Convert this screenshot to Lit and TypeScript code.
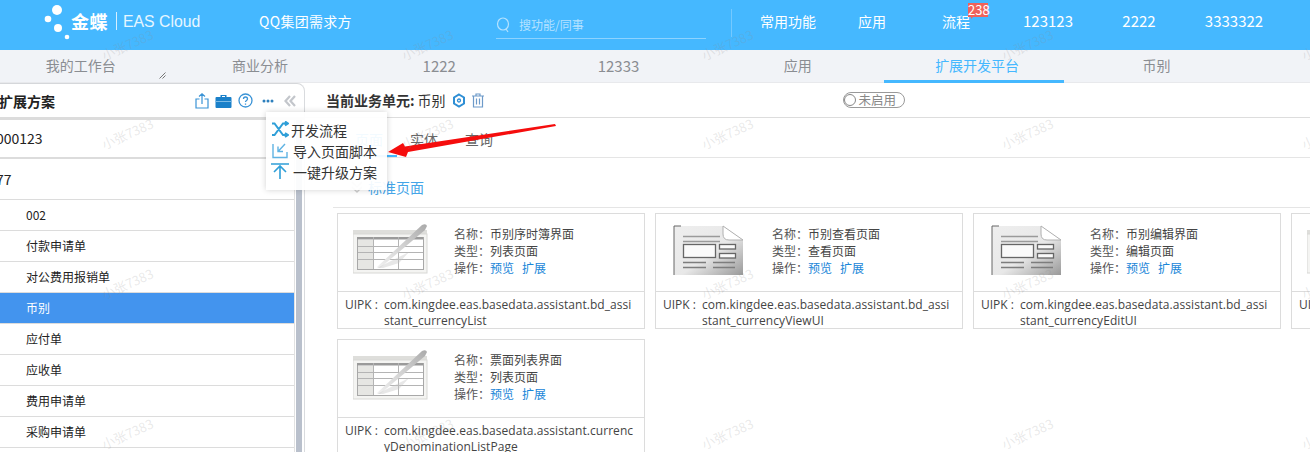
import { LitElement, html, css, svg } from "lit";
import { customElement } from "lit/decorators.js";

const listThumb = svg`<svg class="thumb" width="78" height="56" viewBox="0 0 78 56">
  <defs><linearGradient id="pen" x1="0" y1="1" x2="1" y2="0"><stop offset="0" stop-color="#f2f2f2"/><stop offset=".5" stop-color="#d2d2d2"/><stop offset="1" stop-color="#aaa"/></linearGradient></defs>
  <rect x="0" y="8" width="74" height="4" fill="#dededb"/>
  <rect x="0" y="12" width="74" height="39" fill="#f4f4f2" stroke="#d8d8d5"/>
  <rect x="4.500" y="15.500" width="66" height="32" fill="#fff" stroke="#a8a8a8"/>
  <rect x="4" y="15" width="66" height="2.500" fill="#9a9a9a"/>
  <rect x="5" y="18" width="15" height="29" fill="#e6e6e3"/>
  <path d="M5 24.500H70M5 30.500H70M5 37.500H70M20.500 15V47M45.500 15V47" stroke="#b4b4b4" fill="none"/>
  <path d="M24 45 L69 3 Q73 1 74 4 L72 8 L27 46 Z" fill="url(#pen)"/>
  <path d="M24 46 L56 30 L46 41 L30 46 Z" fill="#c4c4c4" opacity=".4"/>
</svg>`;

const docThumb = svg`<svg class="thumb" width="78" height="56" viewBox="0 0 78 56">
  <defs><linearGradient id="doc" x1="0" y1="0" x2="1" y2="1"><stop offset="0" stop-color="#eee"/><stop offset=".55" stop-color="#e8e8e8"/><stop offset="1" stop-color="#999"/></linearGradient></defs>
  <path d="M3 4H52L72 18V53H3Z" fill="url(#doc)"/>
  <path d="M3 53V4H10" stroke="#666" fill="none"/>
  <path d="M52 4V12Q52 18 58 18H72Z" fill="#fff" stroke="#b0b0b0"/>
  <path d="M12 14.500H49M12 19.500H49" stroke="#9a9a9a" stroke-width="1.300" fill="none"/>
  <rect x="12.500" y="22.500" width="32" height="13" fill="#fafafa" stroke="#666" stroke-width="1.300"/>
  <rect x="48.500" y="22.500" width="16" height="4.500" fill="#fafafa" stroke="#666" stroke-width="1.300"/>
  <rect x="48.500" y="31.500" width="16" height="4.500" fill="#fafafa" stroke="#666" stroke-width="1.300"/>
  <path d="M12 40.500H35M12 45.500H35M42 40.500H64M42 45.500H64" stroke="#7d7d7d" stroke-width="1.300" fill="none"/>
</svg>`;

interface Card { name: string; type: string; uipk: [string, string]; thumb: unknown }

const base = "com.kingdee.eas.basedata.assistant.";
const cards: Card[] = [
  { name: "币别序时簿界面", type: "列表页面", uipk: [base + "bd_assi", "stant_currencyList"], thumb: listThumb },
  { name: "币别查看页面", type: "查看页面", uipk: [base + "bd_assi", "stant_currencyViewUI"], thumb: docThumb },
  { name: "币别编辑界面", type: "编辑页面", uipk: [base + "bd_assi", "stant_currencyEditUI"], thumb: docThumb },
  { name: "币别序时簿", type: "列表页面", uipk: [base + "bd_assi", "stant_currency"], thumb: listThumb },
  { name: "票面列表界面", type: "列表页面", uipk: [base + "currenc", "yDenominationListPage"], thumb: listThumb },
];

const navItems = [
  ["常用功能", 84], ["应用", 84], ["流程", 84], ["123123", 100], ["2222", 82], ["3333322", 108],
] as const;
const tabs = ["我的工作台", "商业分析", "1222", "12333", "应用", "扩展开发平台", "币别"];
const rows = ["002", "付款申请单", "对公费用报销单", "币别", "应付单", "应收单", "费用申请单", "采购申请单"];
const marks: [number, number][] = [];
for (const x of [100, 400, 700, 1000, 1300]) for (const y of [33, 122, 272, 422]) marks.push([x, y]);

@customElement("app-root")
export class AppRoot extends LitElement {
  static styles = css`
    :host { display: block; width: 1310px; height: 452px; overflow: hidden; position: relative; background: #fff;
      font-family: "Noto Sans CJK SC", "Open Sans", sans-serif; font-size: 12px; color: #333; }
    .latin { font-family: "Open Sans", "Noto Sans CJK SC", sans-serif; }

    .header { height: 50px; background: #45b8ff; color: #fff; display: flex; align-items: center; }
    .logo { width: 259px; height: 50px; flex: none; display: flex; align-items: center; padding: 0 0 8px 44px; box-sizing: border-box; }
    .logo svg { flex: none; align-self: flex-start; margin-right: -1px; }
    .logo b { font-size: 18px; line-height: 1; letter-spacing: .5px; font-weight: 700; width: 45px; flex: none; }
    .logo i { width: 1px; height: 18px; background: #d6efff; margin-right: 6px; flex: none; }
    .logo span { font-family: "Liberation Sans", sans-serif; font-size: 15.800px; color: #e6f6ff; white-space: nowrap; padding-top: 1px; }
    .org { width: 237px; flex: none; font-size: 14px; letter-spacing: .3px; padding-bottom: 8px; }
    .search { width: 210px; height: 29px; flex: none; box-sizing: border-box; border-bottom: 1px solid #8dd3ff; margin-bottom: 1px; display: flex; align-items: center; gap: 8px; color: #b5e2ff; font-size: 12px; }
    .divider { width: 1px; height: 28px; background: #74c9ff; margin-left: 25px; margin-top: -4px; flex: none; }
    .nav { display: flex; margin-left: 14px; margin-top: -8px; }
    .nav div { font-size: 14px; line-height: 20px; text-align: center; position: relative; flex: none; }
    .nav .num { font-size: 15px; }
    .badge { position: absolute; left: 54px; top: -8px; height: 14px; line-height: 14px; width: 20px; overflow: visible; text-align: center; background: #f0625a; color: #fff; font-size: 13px; }
    .badge::after { content: ""; position: absolute; left: 3px; bottom: -2px; border-top: 2px solid #f0625a; border-right: 2px solid transparent; }

    .tabs { height: 32px; background: #f1f3f7; display: flex; margin-left: -9px; width: 1319px; border-bottom: 1px solid #e8e9ec; position: relative; }
    .tab { width: 179.300px; flex: none; text-align: center; font-size: 14px; line-height: 31px; color: #8a8d92; position: relative; }
    .tab.num { font-size: 15px; }
    .tab.active { color: #45b8ff; }
    .tab.active::after { content: ""; position: absolute; left: -3px; width: 180px; bottom: -1px; height: 3px; background: #45b8ff; }
    .grip { position: absolute; left: 168px; top: 22px; }

    .main { display: flex; height: 369px; }
    .side { width: 305px; flex: none; box-sizing: border-box; border-right: 1px solid #d9dbde; border-top: 1px solid #d5d7da; border-top-right-radius: 8px; display: flex; flex-direction: column; }
    .side-head { height: 33px; flex: none; display: flex; align-items: center; border-bottom: 3px solid #dcdcdc; }
    .side-head b { font-size: 14px; color: #222; margin-left: -1px; flex: 1; }
    .side-icons { display: flex; align-items: center; margin-right: 8px; }
    .side-body { display: flex; flex: 1; min-height: 0; overflow: hidden; }
    .list { width: 295px; flex: none; border-right: 1px solid #e2e2e2; box-sizing: border-box; }
    .scroll { width: 6px; background: #b9c0cc; margin-left: 1px; flex: none; }
    .top-row { height: 39px; box-sizing: border-box; line-height: 37px; font-size: 14px; color: #222; padding-left: 0; text-indent: -4px; border-bottom: 2px solid #dcdcdc; }
    .top-row.second { height: 41px; line-height: 40px; border-bottom: 1px solid #dcdcdc; }
    .row { height: 31px; box-sizing: border-box; border-bottom: 1px solid #dcdcdc; line-height: 30px; padding-left: 26px; color: #222; }
    .row.sel { background: #4394ee; color: #fff; }

    .content { flex: 1; min-width: 0; }
    .bar { height: 35px; box-sizing: border-box; border-bottom: 1px solid #ddd; display: flex; align-items: center; padding-left: 21px; position: relative; }
    .bar b { font-size: 14px; color: #333; }
    .bar .unit { font-size: 14px; color: #333; margin-left: 3px; }
    .bar svg { flex: none; }
    .toggle { margin-left: 358px; width: 60px; height: 14px; border: 1px solid #999; border-radius: 8px; display: flex; align-items: center; font-size: 12.500px; color: #888; line-height: 14px; gap: 3px; }
    .toggle i { width: 12px; height: 12px; border-radius: 50%; border: 1px solid #888; background: #fff; margin-left: 0; box-sizing: border-box; }
    .subtabs { height: 40px; box-sizing: border-box; border-bottom: 1px solid #e5e5e5; display: flex; align-items: center; font-size: 14px; color: #666; padding: 3px 0 0 50px; }
    .subtabs span { margin-right: 27px; position: relative; }
    .subtabs .on { color: #45b8ff; }
    .subtabs .on::after { content: ""; position: absolute; left: 0; right: -14px; bottom: -8px; height: 2px; background: #45b8ff; }
    .std { height: 50px; margin-left: 28px; box-sizing: border-box; border-bottom: 1px solid #e5e5e5; display: flex; align-items: center; gap: 4px; padding: 19px 0 11px 17px; color: #45a5e8; font-size: 14px; }
    .grid { display: grid; grid-template-columns: repeat(4, 308px); gap: 10px; margin: 5px 0 0 32px; }
    .card { border: 1px solid #dcdcdc; height: 116px; box-sizing: border-box; display: flex; flex-direction: column; }
    .card.long { height: 120px; }
    .card-top { height: 78px; flex: none; display: flex; border-bottom: 1px solid #dcdcdc; box-sizing: border-box; padding: 8px 0 0 15px; }
    .thumb { flex: none; }
    .info { margin-left: 23px; line-height: 17px; margin-top: 3px; }
    .info div { display: flex; white-space: nowrap; color: #555; }
    .info span { color: #444; margin-left: 0; }
    .info label { width: 36px; flex: none; color: #555; }
    .info a { color: #1a86d8; margin-right: 8px; }
    .uipk { display: flex; padding: 5px 0 0 7px; line-height: 16px; color: #444; }
    .uipk label { width: 39px; flex: none; white-space: nowrap; font-size: 12px; }
    .uipk-lines { font-size: 12px; letter-spacing: .06px; white-space: nowrap; }

    .pop { position: absolute; left: 266px; top: 112px; width: 121px; height: 78px; background: rgba(255,255,255,.93); box-shadow: 0 0 6px rgba(0,0,0,.18); box-sizing: border-box; padding-top: 7px; font-size: 14px; color: #333; }
    .pop div { height: 21px; display: flex; align-items: center; padding-left: 5px; gap: 2px; white-space: nowrap; }
    .pop .imp { padding-left: 6px; gap: 4px; }
    .pop .up { gap: 4px; }
    .arrow { position: absolute; left: 380px; top: 115px; }
    .mark { position: absolute; font-size: 13px; color: rgba(140,140,140,.2); transform: rotate(-24deg); white-space: nowrap; pointer-events: none; width: 50px; }
  `;

  private renderCard(c: Card, i: number) {
    return html`<div class="card ${i === 4 ? "long" : ""}">
      <div class="card-top">
        ${c.thumb}
        <div class="info">
          <div><label>名称：</label><span>${c.name}</span></div>
          <div><label>类型：</label><span>${c.type}</span></div>
          <div><label>操作：</label><a>预览</a><a>扩展</a></div>
        </div>
      </div>
      <div class="uipk latin"><label>UIPK :</label><div class="uipk-lines">${c.uipk[0]}<br />${c.uipk[1]}</div></div>
    </div>`;
  }

  render() {
    return html`
      <div class="header">
        <div class="logo">
          <svg width="28" height="40" viewBox="0 0 28 40" fill="#fff"><circle cx="13" cy="10" r="5"/><circle cx="4" cy="19" r="3.300"/><circle cx="14" cy="28" r="4"/><circle cx="23" cy="37" r="2.300"/></svg>
          <b>金蝶</b><i></i><span>EAS Cloud</span>
        </div>
        <div class="org">QQ集团需求方</div>
        <div class="search">
          <svg width="15" height="17" viewBox="0 0 15 17" fill="none" stroke="#b5e2ff" stroke-width="1.200"><ellipse cx="7" cy="8" rx="5.500" ry="6"/><path d="M10 13l2 3"/></svg>
          <span>搜功能/同事</span>
        </div>
        <div class="divider"></div>
        <div class="nav">
          ${navItems.map(([t, w]) => html`<div class=${/\d/.test(t) ? "num" : ""} style="width:${w}px">${t}${t === "流程" ? html`<span class="badge">238</span>` : ""}</div>`)}
        </div>
      </div>
      <div class="tabs">
        ${tabs.map(t => html`<div class="tab ${t === "扩展开发平台" ? "active" : ""} ${/\d/.test(t) ? "num" : ""}">${t}</div>`)}
        <svg class="grip" width="7" height="7" viewBox="0 0 7 7" fill="none" stroke="#777"><path d="M0.500 6.500L6.500 0.500M3.500 6.500L6.500 3.500"/></svg>
      </div>
      <div class="main">
        <div class="side">
          <div class="side-head">
            <b>扩展方案</b>
            <div class="side-icons">
              <svg width="14" height="16" viewBox="0 0 14 16" fill="none" stroke="#3a93d6" stroke-width="1.200"><path d="M4.500 6H1v9h12V6H9.500M7 11V1M4 3.500L7 .8l3 2.700"/></svg>
              <svg style="margin-left:6px" width="17" height="14" viewBox="0 0 17 14"><path d="M5.500 3V1h6v2h4a1 1 0 011 1v9a1 1 0 01-1 1h-14a1 1 0 01-1-1V4a1 1 0 011-1z" fill="#1a80c9"/><rect x="7" y="2" width="3" height="1" fill="#fff"/><rect x="0" y="7" width="17" height="1" fill="#7dbbe6"/></svg>
              <svg style="margin-left:6px" width="15" height="15" viewBox="0 0 15 15" fill="none" stroke="#3a93d6" stroke-width="1.300"><circle cx="7.500" cy="7.500" r="6.500"/><path d="M5.500 6a2 2 0 114 0c0 1.500-2 1.500-2 3M7.500 10.500v1.200"/></svg>
              <svg style="margin-left:9px" width="12" height="4" viewBox="0 0 12 4" fill="#2d7fbd"><circle cx="2" cy="2" r="1.500"/><circle cx="6" cy="2" r="1.500"/><circle cx="10" cy="2" r="1.500"/></svg>
              <svg style="margin-left:10px" width="12" height="12" viewBox="0 0 12 12" fill="none" stroke="#c3c6cb" stroke-width="2.200"><path d="M6 1L1.500 6 6 11M11 1L6.500 6 11 11"/></svg>
            </div>
          </div>
          <div class="side-body">
            <div class="list">
              <div class="top-row">000123</div>
              <div class="top-row second">77</div>
              ${rows.map(r => html`<div class="row ${r === "币别" ? "sel" : ""}">${r}</div>`)}
            </div>
            <div class="scroll"></div>
          </div>
        </div>
        <div class="content">
          <div class="bar">
            <b>当前业务单元:</b><span class="unit">币别</span>
            <svg style="margin-left:6px" width="14" height="15" viewBox="0 0 14 15" fill="none" stroke="#2f8fd5" stroke-width="2"><path d="M7 1.500l5 3v6l-5 3-5-3v-6z"/><circle cx="7" cy="7.500" r="1.500" stroke-width="1.300"/></svg>
            <svg style="margin-left:5px" width="14" height="15" viewBox="0 0 14 15" fill="none" stroke="#6d9ac9" stroke-width="1.200"><path d="M1 3h12M5 3V1h4v2M2.500 3v11h9V3M5.500 5.500v6M8.500 5.500v6"/></svg>
            <div class="toggle"><i></i><span>未启用</span></div>
          </div>
          <div class="subtabs"><span class="on">页面</span><span>实体</span><span>查询</span></div>
          <div class="std">
            <svg width="14" height="14" viewBox="0 0 14 14" fill="none" stroke="#cfcfcf" stroke-width="1.500"><path d="M2 2l5 5 5-5M2 7l5 5 5-5"/></svg>
            <span>标准页面</span>
          </div>
          <div class="grid">
            ${cards.map((c, i) => this.renderCard(c, i))}
          </div>
        </div>
      </div>

      <div class="pop">
        <div><svg width="18" height="18" viewBox="0 0 18 18" fill="none" stroke="#2f9fd8" stroke-width="2"><path d="M1 2.500h2.500L12 14h4M1 14h2.500L12 2.500h4M14 0.500l3 2-3 2M14 12l3 2-3 2"/></svg><span>开发流程</span></div>
        <div class="imp"><svg width="17" height="17" viewBox="0 0 17 17" fill="none" stroke="#5fb3e3" stroke-width="1.400"><path d="M1 2v13.500h14V10M13 2L6.500 9M6 4.500V9.500H11"/></svg><span>导入页面脚本</span></div>
        <div class="up"><svg width="18" height="17" viewBox="0 0 18 17" fill="none" stroke="#2f9fd8" stroke-width="1.600"><path d="M0 1h18M9 16V3M3 9l6-6 6 6"/></svg><span>一键升级方案</span></div>
      </div>
      <svg class="arrow" width="180" height="45" viewBox="380 115 180 45"><polygon points="388,152 403,143 405,146.500 555,124 556,126 408,152 406,157" fill="#f50d0d"/></svg>
      ${marks.map(([x, y]) => html`<div class="mark" style="left:${x}px;top:${y + 3}px">小张7383</div>`)}
    `;
  }
}
